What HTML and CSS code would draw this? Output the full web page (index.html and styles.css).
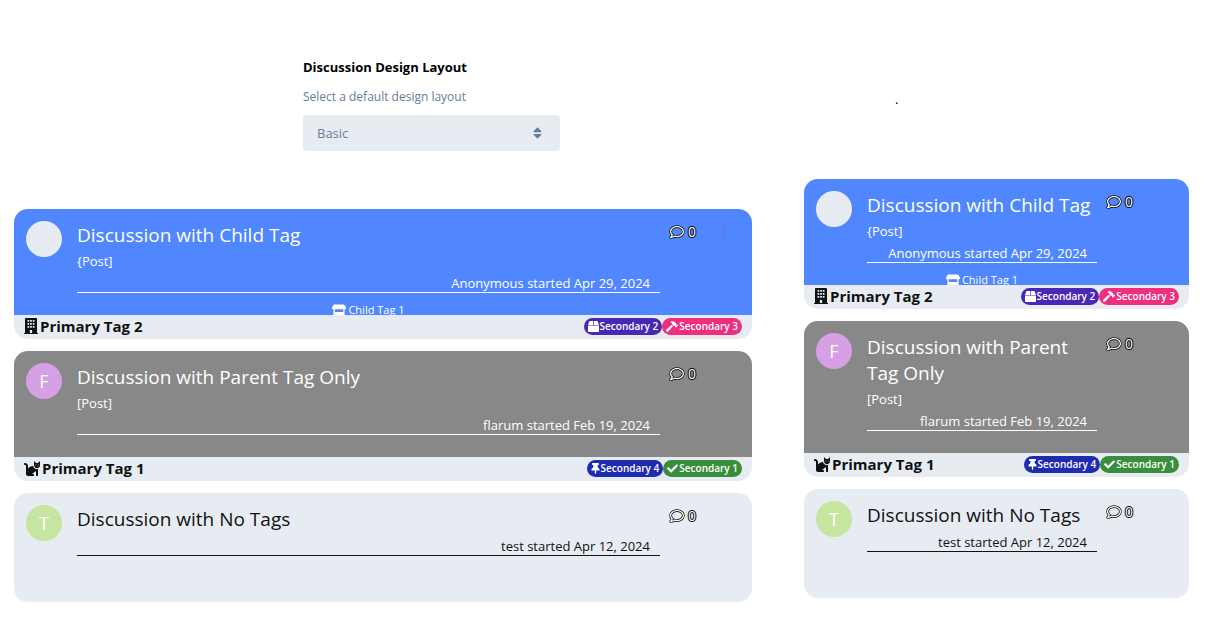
FILE: index.html
```html
<!DOCTYPE html>
<html lang="en">
<head>
<meta charset="utf-8">
<meta name="viewport" content="width=device-width, initial-scale=1">
<title>Discussion Design Layout</title>
<link rel="stylesheet" href="styles.css">
</head>
<body>
<svg class="sprite" aria-hidden="true">
  <symbol id="comment" viewBox="-32 0 576 512"><path d="M256 32C114.6 32 0 125.1 0 240c0 47.6 19.9 91.2 52.9 126.3C38 405.7 7 439.1 6.5 439.5c-6.6 7-8.4 17.2-4.6 26S14.4 480 24 480c61.5 0 110-25.7 139.1-46.3C192 442.8 223.2 448 256 448c141.4 0 256-93.1 256-208S397.4 32 256 32zm0 368c-26.7 0-53.1-4.1-78.4-12.1l-22.7-7.2-19.5 13.8c-14.3 10.1-33.9 21.4-57.5 29 7.3-12.1 14.4-25.7 19.9-40.2l10.6-28.1-20.6-21.8C69.7 314.1 48 282.2 48 240c0-88.2 93.3-160 208-160s208 71.8 208 160-93.3 160-208 160z"/></symbol>
  <symbol id="sort" viewBox="0 0 320 512"><path d="M41 288h238c21.4 0 32.1 25.9 17 41L177 448c-9.4 9.4-24.6 9.4-33.9 0L24 329c-15.1-15.1-4.4-41 17-41zm255-105L177 64c-9.4-9.4-24.6-9.4-33.9 0L24 183c-15.1 15.1-4.4 41 17 41h238c21.4 0 32.1-25.9 17-41z"/></symbol>
  <symbol id="check" viewBox="0 0 512 512"><path d="M173.898 439.404l-166.4-166.4c-9.997-9.997-9.997-26.206 0-36.204l36.203-36.204c9.997-9.998 26.207-9.998 36.204 0L192 312.69 432.095 72.596c9.997-9.997 26.207-9.997 36.204 0l36.203 36.204c9.997 9.997 9.997 26.206 0 36.204l-294.4 294.401c-9.998 9.997-26.207 9.997-36.204-.001z"/></symbol>
  <symbol id="pin" viewBox="0 0 384 512"><path d="M298.028 214.267L285.793 96H328c13.255 0 24-10.745 24-24V24c0-13.255-10.745-24-24-24H56C42.745 0 32 10.745 32 24v48c0 13.255 10.745 24 24 24h42.207L85.972 214.267C37.465 236.82 0 277.261 0 328c0 13.255 10.745 24 24 24h136v104.007c0 1.242.289 2.467.845 3.578l24 48c2.941 5.882 11.364 5.893 14.311 0l24-48a8.008 8.008 0 0 0 .845-3.578V352h136c13.255 0 24-10.745 24-24-.001-51.183-37.983-91.42-85.973-113.733z"/></symbol>
  <symbol id="box" viewBox="0 0 512 512"><path d="M509.5 184.6L458.9 32.8C452.4 13.2 434.1 0 413.4 0H272v192h238.7c-.4-2.5-.4-5-1.2-7.4zM240 0H98.6c-20.7 0-39 13.2-45.5 32.8L2.5 184.6c-.8 2.4-.8 4.9-1.2 7.4H240V0zM0 224v240c0 26.5 21.5 48 48 48h416c26.5 0 48-21.5 48-48V224H0z"/></symbol>
  <symbol id="hammer" viewBox="0 0 576 512"><path d="M571.31 193.94l-22.63-22.63c-6.25-6.25-16.38-6.25-22.63 0l-11.31 11.31-28.9-28.9c5.63-21.31.36-44.9-16.35-61.61l-45.25-45.25c-62.48-62.48-163.79-62.48-226.28 0l90.51 45.25v18.75c0 16.97 6.74 33.25 18.75 45.25l49.14 49.14c16.71 16.71 40.3 21.98 61.61 16.35l28.9 28.9-11.31 11.31c-6.25 6.25-6.25 16.38 0 22.63l22.63 22.63c6.25 6.25 16.38 6.25 22.63 0l90.51-90.51c6.23-6.24 6.23-16.37-.02-22.62zm-286.72-15.2c-3.7-3.7-6.84-7.79-9.85-11.95L19.64 404.96c-25.57 23.88-26.26 64.19-1.53 88.93s65.05 24.05 88.92-1.53l238.13-255.07c-3.96-2.91-7.9-5.87-11.44-9.41l-49.13-49.14z"/></symbol>
  <symbol id="cat" viewBox="0 0 512 512"><path d="M290.59 192c-20.18 0-106.82 1.98-162.59 85.95V192c0-52.94-43.06-96-96-96-17.67 0-32 14.33-32 32s14.33 32 32 32c17.64 0 32 14.36 32 32v256c0 35.3 28.7 64 64 64h176c8.84 0 16-7.16 16-16v-16c0-17.67-14.33-32-32-32h-32l128-96v144c0 8.84 7.16 16 16 16h32c8.84 0 16-7.16 16-16V289.86c-10.29 2.67-20.89 4.54-32 4.54-61.81 0-113.52-44.05-125.41-102.4zM448 96h-64l-64-64v134.4c0 53.02 42.98 96 96 96s96-42.98 96-96V32l-64 64zm-72 80c-8.84 0-16-7.16-16-16s7.16-16 16-16 16 7.16 16 16-7.16 16-16 16zm80 0c-8.84 0-16-7.16-16-16s7.16-16 16-16 16 7.16 16 16-7.16 16-16 16z"/></symbol>
  <symbol id="building" viewBox="0 0 448 512"><path fill-rule="evenodd" d="M436 480h-20V24c0-13-11-24-24-24H56C43 0 32 11 32 24v456H12c-7 0-12 5-12 12v20h448v-20c0-7-5-12-12-12zM112 64h56v56h-56zm84 0h56v56h-56zm84 0h56v56h-56zM112 160h56v56h-56zm84 0h56v56h-56zm84 0h56v56h-56zM112 256h56v56h-56zm84 0h56v56h-56zm84 0h56v56h-56zM188 384h72v96h-72z"/></symbol>
  <symbol id="shop" viewBox="0 0 640 512"><path fill-rule="evenodd" d="M110 0h420c12 0 22 5 29 15l75 113c18 27 2 96-40 96H46c-42 0-58-69-40-96L81 15C88 5 98 0 110 0zM64 224h64v128h384V224h64v256c0 18-14 32-32 32H96c-18 0-32-14-32-32z"/></symbol>
  <symbol id="dots" viewBox="0 0 6 18"><circle cx="3" cy="3" r="2"/><circle cx="3" cy="9" r="2"/><circle cx="3" cy="15" r="2"/></symbol>
</svg>
<main class="page">
  <section class="column">
    <form class="setting">
      <label class="setting-title" for="layout">Discussion Design Layout</label>
      <p class="setting-help" id="layout-help">Select a default design layout</p>
      <div class="select">
        <select id="layout" aria-describedby="layout-help"><option>Basic</option></select>
        <svg class="select-icon" aria-hidden="true"><use href="#sort"/></svg>
      </div>
    </form>
    <div class="list">
      <article class="card card-blue">
        <div class="card-body">
          <span class="avatar"></span>
          <div class="content">
            <h2 class="title">Discussion with Child Tag</h2>
            <p class="post">{Post]</p>
            <p class="info">Anonymous started Apr 29, 2024</p>
            <div class="child"><svg class="icon-shop"><use href="#shop"/></svg>Child Tag 1</div>
          </div>
          <span class="count"><svg class="icon-comment"><use href="#comment"/></svg><span class="number">0</span></span>
          <button class="more" type="button" aria-label="More"><svg class="icon-dots"><use href="#dots"/></svg></button>
        </div>
        <footer class="card-footer">
          <span class="primary"><svg class="icon-building"><use href="#building"/></svg>Primary Tag 2</span>
          <span class="pill violet"><svg class="icon-pill"><use href="#box"/></svg>Secondary 2</span>
          <span class="pill pink"><svg class="icon-hammer"><use href="#hammer"/></svg>Secondary 3</span>
        </footer>
      </article>
      <article class="card card-gray">
        <div class="card-body">
          <span class="avatar orchid">F</span>
          <div class="content">
            <h2 class="title">Discussion with Parent Tag Only</h2>
            <p class="post">[Post]</p>
            <p class="info">flarum started Feb 19, 2024</p>
            <div class="child"></div>
          </div>
          <span class="count"><svg class="icon-comment"><use href="#comment"/></svg><span class="number">0</span></span>
        </div>
        <footer class="card-footer">
          <span class="primary"><svg class="icon-cat"><use href="#cat"/></svg>Primary Tag 1</span>
          <span class="pill navy"><svg class="icon-pin"><use href="#pin"/></svg>Secondary 4</span>
          <span class="pill green"><svg class="icon-pill"><use href="#check"/></svg>Secondary 1</span>
        </footer>
      </article>
      <article class="card">
        <div class="card-body">
          <span class="avatar lime">T</span>
          <div class="content">
            <h2 class="title">Discussion with No Tags</h2>
            <p class="info">test started Apr 12, 2024</p>
            <div class="child"></div>
          </div>
          <span class="count"><svg class="icon-comment"><use href="#comment"/></svg><span class="number">0</span></span>
        </div>
        <footer class="card-footer"></footer>
      </article>
    </div>
  </section>
  <section class="column">
    <p class="dot">.</p>
    <div class="list">
      <article class="card card-blue">
        <div class="card-body">
          <span class="avatar"></span>
          <div class="content">
            <h2 class="title">Discussion with Child Tag</h2>
            <p class="post">{Post]</p>
            <p class="info">Anonymous started Apr 29, 2024</p>
            <div class="child"><svg class="icon-shop"><use href="#shop"/></svg>Child Tag 1</div>
          </div>
          <span class="count"><svg class="icon-comment"><use href="#comment"/></svg><span class="number">0</span></span>
        </div>
        <footer class="card-footer">
          <span class="primary"><svg class="icon-building"><use href="#building"/></svg>Primary Tag 2</span>
          <span class="pill violet"><svg class="icon-pill"><use href="#box"/></svg>Secondary 2</span>
          <span class="pill pink"><svg class="icon-hammer"><use href="#hammer"/></svg>Secondary 3</span>
        </footer>
      </article>
      <article class="card card-gray">
        <div class="card-body">
          <span class="avatar orchid">F</span>
          <div class="content">
            <h2 class="title">Discussion with Parent Tag Only</h2>
            <p class="post">[Post]</p>
            <p class="info">flarum started Feb 19, 2024</p>
            <div class="child"></div>
          </div>
          <span class="count"><svg class="icon-comment"><use href="#comment"/></svg><span class="number">0</span></span>
        </div>
        <footer class="card-footer">
          <span class="primary"><svg class="icon-cat"><use href="#cat"/></svg>Primary Tag 1</span>
          <span class="pill navy"><svg class="icon-pin"><use href="#pin"/></svg>Secondary 4</span>
          <span class="pill green"><svg class="icon-pill"><use href="#check"/></svg>Secondary 1</span>
        </footer>
      </article>
      <article class="card">
        <div class="card-body">
          <span class="avatar lime">T</span>
          <div class="content">
            <h2 class="title">Discussion with No Tags</h2>
            <p class="info">test started Apr 12, 2024</p>
            <div class="child"></div>
          </div>
          <span class="count"><svg class="icon-comment"><use href="#comment"/></svg><span class="number">0</span></span>
        </div>
        <footer class="card-footer"></footer>
      </article>
    </div>
  </section>
</main>
</body>
</html>
```
FILE: styles.css
```css
* { box-sizing: border-box; }
body {
  margin: 0;
  background: #fff;
  color: #111;
  font: 13px/20px "Open Sans", "Noto Sans", sans-serif;
}
h2, p { margin: 0; font-weight: 400; }
svg { fill: currentColor; flex: none; }
.sprite { display: none; }

.page {
  display: grid;
  grid-template-columns: 738fr 385fr;
  gap: 52px;
  padding: 57px 27px 24px 14px;
}

.setting {
  width: 257px;
  margin: 0 0 58px 289px;
}
.setting-title {
  display: block;
  color: #000;
  font-weight: 700;
}
.setting-help {
  margin: 10px 0 8px;
  color: #667d99;
  font-size: 12px;
}
.select { position: relative; }
.select select {
  display: block;
  width: 100%;
  height: 36px;
  padding: 0 36px 0 14px;
  border: 0;
  border-radius: 4px;
  appearance: none;
  background: #e7ecf3;
  color: #667d99;
  font: inherit;
}
.select-icon {
  position: absolute;
  top: 11px;
  right: 18px;
  width: 9px;
  height: 14px;
  color: #667d99;
  pointer-events: none;
}
.dot {
  margin: 0 0 70px 91px;
  padding-top: 32px;
  color: #000;
}

.list {
  display: grid;
  gap: 12px;
}
.card {
  border-radius: 14px;
  background: #e7ecf3;
  overflow: hidden;
}
.card-body {
  display: grid;
  grid-template-columns: 36px 1fr 42px 17px;
  column-gap: 9px;
  align-items: start;
  padding: 12px 15px 0 12px;
}
.card-blue .card-body { background: #5087ff; color: #fff; }
.card-gray .card-body { background: #888; color: #fff; }
.avatar {
  width: 36px;
  height: 36px;
  border-radius: 50%;
  background: #e7ecf3;
  color: #fff;
  font-size: 18px;
  line-height: 36px;
  text-align: center;
}
.orchid { background: #d6a0e5; }
.lime { background: #c6e5a0; }
.content { padding: 1px 0 0 6px; }
.title {
  margin-bottom: 2px;
  font-size: 19px;
  line-height: 26px;
}
.post {
  padding-top: 2px;
  line-height: 19px;
}
.info {
  padding: 4px 10px 0 0;
  border-bottom: 1px solid currentColor;
  line-height: 17px;
  text-align: right;
}
.child {
  display: flex;
  justify-content: center;
  align-items: center;
  gap: 2px;
  height: 22px;
  padding-top: 12px;
  overflow: hidden;
  font-size: 11px;
}
.icon-shop { width: 14px; height: 12px; }
.count {
  display: flex;
  align-items: center;
  gap: 3px;
  padding-top: 1px;
  color: #fff;
}
.icon-comment {
  width: 16px;
  height: 14px;
  overflow: visible;
  stroke: #000;
  stroke-width: 52;
  paint-order: stroke;
}
.number {
  font-size: 14px;
  -webkit-text-stroke: 2px #000;
  paint-order: stroke;
}
.more {
  display: flex;
  width: 12px;
  padding: 2px 0 0;
  border: 0;
  background: none;
  color: #667d99;
}
.icon-dots { width: 6px; height: 18px; opacity: .35; }
.card-footer {
  display: flex;
  align-items: center;
  height: 24px;
  padding: 0 10px 2px;
}
.primary {
  display: flex;
  align-items: center;
  gap: 2px;
  margin-right: auto;
  font-size: 15px;
  font-weight: 700;
}
.icon-building { width: 14px; height: 16px; }
.icon-cat { width: 16px; height: 16px; }
.pill {
  display: flex;
  align-items: center;
  gap: 1px;
  height: 17px;
  padding: 0 4px;
  border-radius: 9px;
  color: #fff;
  font-size: 10px;
  font-weight: 600;
}
.icon-pill { width: 11px; height: 11px; }
.icon-hammer { width: 12px; height: 11px; }
.icon-pin { width: 9px; height: 11px; }
.violet { background: #4829b6; }
.pink { background: #ef2e7e; }
.navy { background: #1f2cb0; }
.green { background: #388e3c; }
```
